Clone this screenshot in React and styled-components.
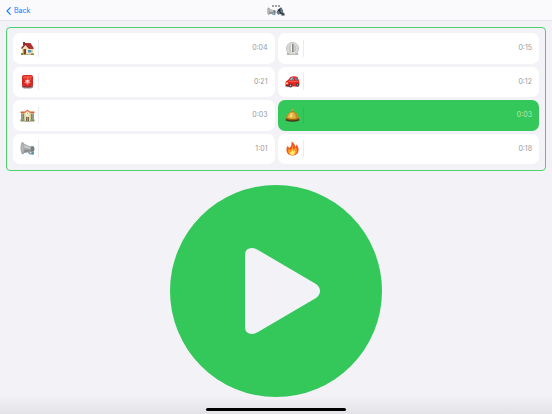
import React, { useState } from 'react';
import styled, { createGlobalStyle, css } from 'styled-components';

const GlobalStyle = createGlobalStyle`
  * {
    box-sizing: border-box;
  }
  body {
    margin: 0;
    background: #f2f2f7;
    font-family: Inter, 'Liberation Sans', sans-serif;
  }
`;

const Screen = styled.div`
  display: flex;
  flex-direction: column;
  min-height: 100vh;
  background: linear-gradient(to top, #e2e2e7 0, #f2f2f7 18px);
`;

const NavBar = styled.header`
  display: grid;
  grid-template-columns: 1fr auto 1fr;
  align-items: center;
  height: 21px;
  padding: 0 6px;
  background: #fafafc;
  border-bottom: 1px solid #e4e4e8;
`;

const BackLink = styled.a`
  display: inline-flex;
  align-items: center;
  justify-self: start;
  gap: 3px;
  padding-top: 1px;
  color: #0a7cff;
  font-size: 7px;
  line-height: 10px;
  text-decoration: none;

  svg {
    width: 5px;
    height: 8px;
  }
`;

const NavTitle = styled.div`
  display: flex;
  flex-direction: column;
  align-items: center;

  svg {
    display: block;
  }
`;

const TitleIcons = styled.div`
  display: flex;

  svg {
    width: 9px;
    height: 9px;
  }
`;

const Content = styled.main`
  flex: 1;
  display: flex;
  flex-direction: column;
  gap: 14px;
  padding: 6px 6px 0;
`;

const Panel = styled.section`
  padding: 5px 6px 6px;
  border: 1px solid #4fd070;
  border-radius: 4px;
`;

const SoundGrid = styled.div`
  display: grid;
  grid-template-columns: 1fr 1fr;
  grid-auto-rows: 1fr;
  gap: 3px;
  min-height: 131px;
`;

const SoundButton = styled.button`
  display: flex;
  align-items: center;
  padding: 0 7px;
  border: 0;
  border-radius: 7px;
  background: #fff;
  color: #98989c;
  font-family: inherit;
  font-size: 7px;
  line-height: 10px;
  cursor: pointer;

  ${props =>
    props.$active &&
    css`
      background: #34c759;
      color: #b5eac3;
    `};

  svg {
    width: 15px;
    height: 15px;
  }
`;

const Divider = styled.span`
  width: 1px;
  height: 17px;
  margin-left: 3px;
  background: ${props => (props.$active ? '#31bb54' : '#ececee')};
`;

const Duration = styled.span`
  margin-left: auto;
`;

const PlayButton = styled.button`
  align-self: center;
  width: 212px;
  height: 212px;
  padding: 0;
  border: 0;
  border-radius: 50%;
  background: #34c759;
  cursor: pointer;

  svg {
    display: block;
    width: 100%;
    height: 100%;
  }
`;

const Footer = styled.footer`
  display: flex;
  justify-content: center;
  padding: 11px 0 3px;
`;

const HomeIndicator = styled.div`
  width: 140px;
  height: 3px;
  border-radius: 2px;
  background: #000;
`;

// ICONS
const Icon = ({ children }) => (
  <svg viewBox="0 0 30 30" aria-hidden="true">
    {children}
  </svg>
);

const HouseIcon = () => (
  <Icon>
    <path d="M4 13 10 6h10l6 9v12H4z" fill="#ead2a0" />
    <path d="M4 14 11 6l8 9v12H4z" fill="#f3dfb5" />
    <path d="M6 2h4v7H6z" fill="#853c34" />
    <path d="M10 4h11l7 11-3 1h-6l-8-10z" fill="#b3312e" />
    <path d="M2 14 11 4l9 11-2 1-7-8-7 8z" fill="#8e282a" />
    <path d="M7 16h5v11H7z" fill="#78472f" />
    <path d="M15 17h9v7h-9z" fill="#fff3d9" />
    <path d="M16 18h7v5h-7z" fill="#4f91bd" />
    <path d="M2 24h4v4H2zM22 25h6v3h-6z" fill="#69903c" />
    <path d="M5 27h19v1H5z" fill="#a68355" />
  </Icon>
);

const SirenIcon = () => (
  <Icon>
    <path d="M5 23h20l1 4-4 2H8l-4-2z" fill="#8b9298" />
    <path d="M4 5q0-3 4-3h14q4 0 4 3v17q-11 5-22 0z" fill="#d52823" />
    <path d="M6 5q9-3 18 0l-1 4H7z" fill="#f0523f" />
    <path d="m16 7 1 5 5-2-3 5 3 3-5 1-2 4-2-4-5-1 3-3-2-4 4 1z" fill="#f98576" />
    <path d="M13 12h4v5h-4z" fill="#ffe7e2" />
    <path d="M4 22q11 5 22 0v3q-11 4-22 0z" fill="#ac2421" />
  </Icon>
);

const SchoolIcon = () => (
  <Icon>
    <path d="M2 10h26v16H2z" fill="#b9b48d" />
    <path d="M1 7h28v3H1z" fill="#d7603d" />
    <path d="M9 8 15 4l6 4v18H9z" fill="#efdda6" />
    <path d="m8 9 7-6 7 6-2 1-5-4-5 4z" fill="#e36e49" />
    <circle cx="15" cy="12" r="3" fill="#fffce9" />
    <path d="M15 10v2h2" fill="none" stroke="#6d7785" />
    <path d="M3 12h2v11H3zM6 12h2v11H6zM22 12h2v11h-2zM25 12h2v11h-2z" fill="#71858a" />
    <path d="M12 18h6v8h-6z" fill="#72674e" />
    <path d="M14 18h2v8h-2z" fill="#a39c7c" />
    <path d="M1 23h8v4H1zM21 23h8v4h-8z" fill="#7e8f62" />
    <path d="M9 26h12v2H9z" fill="#b2a88d" />
  </Icon>
);

const MegaphoneIcon = () => (
  <Icon>
    <path d="M4 2q7 6 21 10l3 7-8 4Q9 21 5 27z" fill="#a9abab" />
    <path d="M5 5q7 6 18 8v3q-9-2-18-3z" fill="#c9caca" />
    <path d="M5 19q8-3 17-1l-3 5Q9 21 5 27z" fill="#8a8d8e" />
    <ellipse cx="5" cy="14" rx="4" ry="12" fill="#a3a5a5" />
    <ellipse cx="5" cy="14" rx="2" ry="9" fill="#b6b8b8" />
    <path d="m21 11 6-1 2 5-1 6-6 1z" fill="#777f84" />
    <path d="M16 20h4v4h3v-4h5v7h-8l-4-3z" fill="#8ba0ac" />
    <path d="M23 22h4v5h-4z" fill="#5f93b3" />
  </Icon>
);

const ClockIcon = () => (
  <Icon>
    <path d="M5 22h20l2 6H3z" fill="#b9b9b7" />
    <circle cx="15" cy="15" r="13" fill="#b4b4b2" />
    <circle cx="15" cy="15" r="12" fill="#e0e0dd" />
    <circle cx="15" cy="15" r="10" fill="none" stroke="#b8b9b6" strokeWidth="2" strokeDasharray="1 2" />
    <circle cx="15" cy="15" r="7" fill="#cfd0cd" stroke="#b0b1ae" />
    <path d="M14 6h3v16h-3z" fill="#858784" />
    <path d="M12 8h2v13h-2z" fill="#f5f5f1" />
  </Icon>
);

const CarIcon = () => (
  <Icon>
    <path d="M1 17q1-4 5-5l5-6q7-3 14 0l3 7 1 9-3 3H4l-3-4z" fill="#ec2420" />
    <path d="m9 12 4-5h5v6H8zM20 7l4 1 2 5h-6z" fill="#56849b" />
    <path d="m10 11 4-4h2l-3 5z" fill="#a0c6d2" />
    <path d="M7 14h20v2H7z" fill="#ff5142" />
    <path d="M2 17h4v3H2z" fill="#ffd6a0" />
    <path d="M1 22h7v3H1z" fill="#8c2426" />
    <circle cx="11" cy="23" r="4" fill="#34373b" />
    <circle cx="25" cy="22" r="3.5" fill="#34373b" />
    <circle cx="11" cy="23" r="2" fill="#a9afb3" />
    <circle cx="25" cy="22" r="1.6" fill="#a9afb3" />
  </Icon>
);

const BellIcon = () => (
  <Icon>
    <path d="M2 21h26l1 4q-14 5-28 0z" fill="#4a3a20" />
    <path d="M2 21Q4 9 12 8h6q8 1 10 13-13 4-26 0z" fill="#c48d22" />
    <path d="M5 20Q7 10 12 9h6q3 3 4 12-9 1-17-1z" fill="#e3b040" />
    <path d="M9 18q1-6 4-8h2l-1 9z" fill="#f6d883" />
    <path d="M2 20q13 4 26 0v2q-13 5-26 0z" fill="#97660f" />
    <path d="M14 4h3v4h-3z" fill="#a8731a" />
    <ellipse cx="15" cy="4" rx="2" ry="2" fill="#d9a437" />
  </Icon>
);

const FireIcon = () => (
  <Icon>
    <path
      d="M13 1q8 5 7 11 3-2 2-5 6 5 5 12-1 9-11 10Q5 29 3 20q-1-7 3-11 0 4 3 5 5-5 4-13z"
      fill="#f25520"
    />
    <path d="M14 7q4 5 2 10 4-1 5-5 4 5 3 9-2 7-9 7-8 0-9-8 0-4 2-5 1 3 3 3 5-4 3-11z" fill="#ff9b24" />
    <path d="M15 15q2 4 1 6l4-2q0 9-5 9-6 0-6-7 1 2 3 1 4-2 3-7z" fill="#ffeb70" />
  </Icon>
);

const SpeakerIcon = () => (
  <Icon>
    <path d="m7 8 10-7 7 12-5 10-11 1-6-6z" fill="#2c3338" />
    <path d="m15 3 5 2 3 9-4 7-4-7z" fill="#6d8390" />
    <path d="m1 17 8-4 6 8-8 5z" fill="#667984" />
    <path d="m20 17 8 4 1 7H17z" fill="#384b58" />
  </Icon>
);

const sounds = [
  { name: 'House', icon: HouseIcon, duration: '0:04' },
  { name: 'Timer', icon: ClockIcon, duration: '0:15' },
  { name: 'Siren', icon: SirenIcon, duration: '0:21' },
  { name: 'Car', icon: CarIcon, duration: '0:12' },
  { name: 'School', icon: SchoolIcon, duration: '0:03' },
  { name: 'Bell', icon: BellIcon, duration: '0:03' },
  { name: 'Megaphone', icon: MegaphoneIcon, duration: '1:01' },
  { name: 'Fire', icon: FireIcon, duration: '0:18' },
];

const App = () => {
  const [selected, setSelected] = useState('Bell');

  return (
    <>
      <GlobalStyle />
      <Screen>
        <NavBar>
          <BackLink href="#back">
            <svg viewBox="0 0 5 8" fill="none" stroke="currentColor" aria-hidden="true">
              <path d="M4.3.6 1 4l3.3 3.4" strokeWidth="1.1" strokeLinecap="round" strokeLinejoin="round" />
            </svg>
            Back
          </BackLink>
          <NavTitle>
            <svg width="10" height="2" viewBox="0 0 10 2" fill="#77777b" aria-hidden="true">
              <circle cx="2" cy="1" r=".9" />
              <circle cx="5" cy="1" r=".9" />
              <circle cx="8" cy="1" r=".9" />
            </svg>
            <TitleIcons>
              <MegaphoneIcon />
              <SpeakerIcon />
            </TitleIcons>
          </NavTitle>
        </NavBar>
        <Content>
          <Panel>
            <SoundGrid>
              {sounds.map(({ name, icon: SoundIcon, duration }) => {
                const active = name === selected;
                return (
                  <SoundButton
                    key={name}
                    type="button"
                    aria-label={`${name} ${duration}`}
                    aria-pressed={active}
                    $active={active}
                    onClick={() => setSelected(name)}
                  >
                    <SoundIcon />
                    <Divider $active={active} />
                    <Duration>{duration}</Duration>
                  </SoundButton>
                );
              })}
            </SoundGrid>
          </Panel>
          <PlayButton type="button" aria-label="Play">
            <svg viewBox="0 0 212 212" aria-hidden="true">
              <path
                d="M75 70Q75 63 82 63Q85 63 88 65L146 99Q150 102 150 106Q150 110 146 113L88 147Q85 149 82 149Q75 149 75 142Z"
                fill="#f2f2f7"
              />
            </svg>
          </PlayButton>
        </Content>
        <Footer>
          <HomeIndicator />
        </Footer>
      </Screen>
    </>
  );
};

export default App;
